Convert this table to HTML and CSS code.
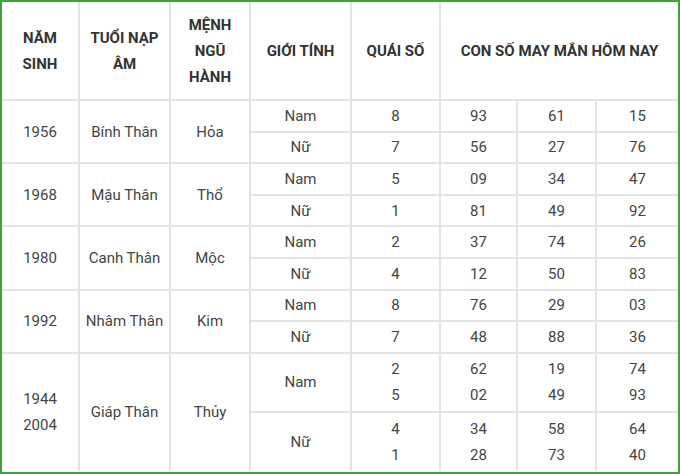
FILE: index.html
```html
<!DOCTYPE html>
<html lang="vi">
<head>
<meta charset="utf-8">
<title>Con số may mắn</title>
<link rel="stylesheet" href="styles.css">
</head>
<body>
<div class="frame">
<table class="luck">
<colgroup>
<col class="c1"><col class="c2"><col class="c3"><col class="c4"><col class="c5"><col class="c6"><col class="c7"><col class="c8">
</colgroup>
<thead>
<tr class="head">
<th>NĂM<br>SINH</th>
<th>TUỔI NẠP<br>ÂM</th>
<th>MỆNH<br>NGŨ<br>HÀNH</th>
<th>GIỚI TÍNH</th>
<th>QUÁI SỐ</th>
<th colspan="3">CON SỐ MAY MẮN HÔM NAY</th>
</tr>
</thead>
<tbody>
<tr class="r"><td rowspan="2">1956</td><td rowspan="2">Bính Thân</td><td rowspan="2">Hỏa</td><td>Nam</td><td>8</td><td>93</td><td>61</td><td>15</td></tr>
<tr class="r"><td>Nữ</td><td>7</td><td>56</td><td>27</td><td>76</td></tr>
<tr class="r"><td rowspan="2">1968</td><td rowspan="2">Mậu Thân</td><td rowspan="2">Thổ</td><td>Nam</td><td>5</td><td>09</td><td>34</td><td>47</td></tr>
<tr class="r"><td>Nữ</td><td>1</td><td>81</td><td>49</td><td>92</td></tr>
<tr class="r"><td rowspan="2">1980</td><td rowspan="2">Canh Thân</td><td rowspan="2">Mộc</td><td>Nam</td><td>2</td><td>37</td><td>74</td><td>26</td></tr>
<tr class="r"><td>Nữ</td><td>4</td><td>12</td><td>50</td><td>83</td></tr>
<tr class="r"><td rowspan="2">1992</td><td rowspan="2">Nhâm Thân</td><td rowspan="2">Kim</td><td>Nam</td><td>8</td><td>76</td><td>29</td><td>03</td></tr>
<tr class="r"><td>Nữ</td><td>7</td><td>48</td><td>88</td><td>36</td></tr>
<tr class="big"><td rowspan="2">1944<br>2004</td><td rowspan="2">Giáp Thân</td><td rowspan="2">Thủy</td><td>Nam</td><td>2<br>5</td><td>62<br>02</td><td>19<br>49</td><td>74<br>93</td></tr>
<tr class="big"><td>Nữ</td><td>4<br>1</td><td>34<br>28</td><td>58<br>73</td><td>64<br>40</td></tr>
</tbody>
</table>
</div>
</body>
</html>
```

FILE: styles.css
```css
html, body {
  margin: 0;
  padding: 0;
  background: #fff;
}

.frame {
  width: 680px;
  height: 474px;
  box-sizing: border-box;
  border: 2px solid #3da33d;
  overflow: hidden;
}

.luck {
  width: 676px;
  border-collapse: collapse;
  table-layout: fixed;
  font-family: Roboto, "Liberation Sans", Arial, sans-serif;
  font-size: 15px;
  color: #454545;
  border-style: hidden;
}

.c1 { width: 77px; }
.c2 { width: 91px; }
.c3 { width: 80px; }
.c4 { width: 101px; }
.c5 { width: 89px; }
.c6 { width: 77px; }
.c7 { width: 79px; }
.c8 { width: 82px; }

.luck th,
.luck td {
  border: 2px solid #e4e4e4;
  text-align: center;
  vertical-align: middle;
  padding: 0 4px;
}

.luck th {
  font-weight: 700;
  color: #333;
  line-height: 26px;
}

.head { height: 98px; }
.r { height: 31.6px; }
.r td { line-height: 20px; }
.big { height: 59px; }
.big td { line-height: 26px; }
```
